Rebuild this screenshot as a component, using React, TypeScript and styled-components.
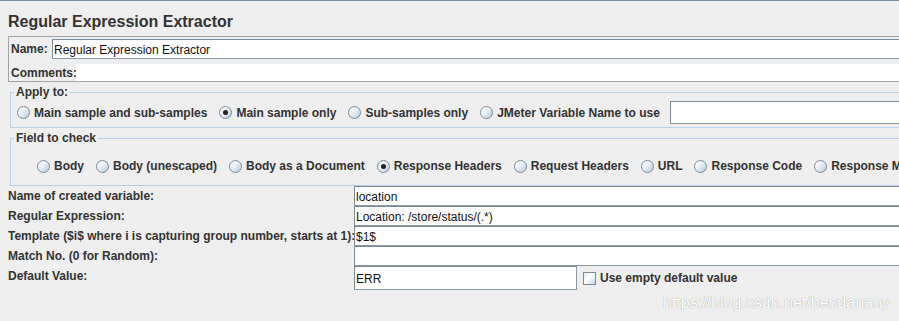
import React from 'react';
import styled, { createGlobalStyle } from 'styled-components';

const GlobalStyle = createGlobalStyle`
  html, body {
    margin: 0;
    padding: 0;
    background: #eeeeee;
    overflow: hidden;
    font-family: "Liberation Sans", Arial, sans-serif;
    color: #333333;
  }
`

const Page = styled.main`
  position: relative;
  width: 960px;
  height: 320px;
  border-top: 1px solid #7a8a99;
  background: #eeeeee;
`

const Title = styled.h1`
  margin: 0;
  padding: 8px 8px 0;
  font-size: 16px;
  line-height: 26px;
  font-weight: bold;
  color: #333333;
`

const NameBox = styled.div`
  margin: 1px 0 0 8px;
  border: 1px solid #a3a3a3;
  padding: 1px 0 0 1px;
  display: flex;
  flex-direction: column;
`

const BoxRow = styled.div<{ $top: number; $height: number }>`
  display: flex;
  align-items: center;
  margin-top: ${p => p.$top}px;
  height: ${p => p.$height}px;
`

const BoxLabel = styled.span<{ $width: number }>`
  width: ${p => p.$width}px;
  padding-left: 1px;
  box-sizing: border-box;
  font-size: 12px;
  font-weight: bold;
  white-space: nowrap;
`

const TextInput = styled.input<{ $height?: number; $width?: string }>`
  box-sizing: border-box;
  height: ${p => p.$height ?? 20}px;
  width: ${p => p.$width ?? 'auto'};
  flex: ${p => (p.$width ? 'none' : '1')};
  min-width: 0;
  margin: 0;
  border: 1px solid #8c9aa7;
  border-top-color: #7a8a99;
  border-left-color: #7a8a99;
  background: #ffffff;
  padding: 2px 1px 0;
  font-family: "Liberation Sans", Arial, sans-serif;
  font-size: 12px;
  color: #111111;
  outline: none;
`

const CommentArea = styled.div`
  flex: 1;
  height: 100%;
  background: #ffffff;
`

const Group = styled.fieldset`
  margin: 3px 0 0 10px;
  padding: 0;
  min-width: 0;
  border: 1px solid #b8cfe5;
`

const Legend = styled.legend`
  margin-left: 3px;
  padding: 0 2px;
  font-size: 12px;
  line-height: 14px;
  font-weight: bold;
  color: #333333;
`

const OptionRow = styled.div<{ $pad: string; $height: number }>`
  display: flex;
  align-items: center;
  gap: 12px;
  height: ${p => p.$height}px;
  padding: ${p => p.$pad};
  white-space: nowrap;
`

const Option = styled.label<{ $grow?: boolean }>`
  display: flex;
  align-items: center;
  gap: 4px;
  flex: ${p => (p.$grow ? '1' : 'none')};
  font-size: 12px;
  font-weight: bold;
  color: #333333;
`

const Radio = styled.span<{ $on?: boolean }>`
  position: relative;
  width: 13px;
  height: 13px;
  box-sizing: border-box;
  border-radius: 50%;
  border: 1px solid #7a8a99;
  background: linear-gradient(135deg, #ffffff 0%, #e8eef5 45%, #b9c9da 100%);
  flex: none;

  &::after {
    content: '';
    display: ${p => (p.$on ? 'block' : 'none')};
    position: absolute;
    left: 3px;
    top: 3px;
    width: 5px;
    height: 5px;
    border-radius: 50%;
    background: #222222;
  }
`

const Check = styled.span`
  width: 13px;
  height: 13px;
  box-sizing: border-box;
  border: 1px solid #7a8a99;
  background: linear-gradient(135deg, #dfe8f1 0%, #ffffff 45%, #c3d3e4 100%);
  flex: none;
`

const Form = styled.div`
  display: grid;
  grid-template-columns: 346px 1fr;
  grid-auto-rows: 20px;
  padding-left: 8px;
`

const FieldLabel = styled.span`
  padding-top: 3px;
  font-size: 12px;
  line-height: 14px;
  font-weight: bold;
  white-space: nowrap;
  color: #333333;
`

const LastRow = styled.div`
  display: flex;
  align-items: center;
  height: 24px;
  gap: 4px;
`

const Watermark = styled.div`
  position: absolute;
  left: 663px;
  top: 293px;
  font-size: 16px;
  line-height: 18px;
  color: #ffffff;
  text-shadow: 0 0 1px rgba(0, 0, 0, 0.45);
  white-space: nowrap;
`

const applyOptions = [
  { label: 'Main sample and sub-samples', on: false },
  { label: 'Main sample only', on: true },
  { label: 'Sub-samples only', on: false },
]

const fieldOptions = [
  { label: 'Body', on: false },
  { label: 'Body (unescaped)', on: false },
  { label: 'Body as a Document', on: false },
  { label: 'Response Headers', on: true },
  { label: 'Request Headers', on: false },
  { label: 'URL', on: false },
  { label: 'Response Code', on: false },
  { label: 'Response Message', on: false },
]

const fields = [
  { label: 'Name of created variable:', value: 'location' },
  { label: 'Regular Expression:', value: 'Location: /store/status/(.*)' },
  { label: 'Template ($i$ where i is capturing group number, starts at 1):', value: '$1$' },
  { label: 'Match No. (0 for Random):', value: '' },
]

const App: React.FC = () => {
  return (
    <Page>
      <GlobalStyle />
      <Title>Regular Expression Extractor</Title>

      <NameBox>
        <BoxRow $top={1} $height={20}>
          <BoxLabel $width={42}>Name:</BoxLabel>
          <TextInput readOnly value="Regular Expression Extractor" />
        </BoxRow>
        <BoxRow $top={5} $height={17}>
          <BoxLabel $width={66}>Comments:</BoxLabel>
          <CommentArea />
        </BoxRow>
      </NameBox>

      <Group>
        <Legend>Apply to:</Legend>
        <OptionRow $pad="2px 0 3px 6px" $height={23}>
          {applyOptions.map(o => (
            <Option key={o.label}>
              <Radio $on={o.on} />
              {o.label}
            </Option>
          ))}
          <Option $grow>
            <Radio />
            JMeter Variable Name to use
            <TextInput readOnly value="" $height={23} style={{ marginLeft: 6 }} />
          </Option>
        </OptionRow>
      </Group>

      <Group>
        <Legend>Field to check</Legend>
        <OptionRow $pad="11px 0 9px 26px" $height={20}>
          {fieldOptions.map(o => (
            <Option key={o.label}>
              <Radio $on={o.on} />
              {o.label}
            </Option>
          ))}
        </OptionRow>
      </Group>

      <Form>
        {fields.map(f => (
          <React.Fragment key={f.label}>
            <FieldLabel>{f.label}</FieldLabel>
            <TextInput readOnly value={f.value} />
          </React.Fragment>
        ))}
        <FieldLabel>Default Value:</FieldLabel>
        <LastRow>
          <TextInput readOnly value="ERR" $height={24} $width="223px" />
          <Check style={{ marginLeft: 2 }} />
          <Option>Use empty default value</Option>
        </LastRow>
      </Form>

      <Watermark>https://blog.csdn.net/bendanany</Watermark>
    </Page>
  );
};

export default App;
